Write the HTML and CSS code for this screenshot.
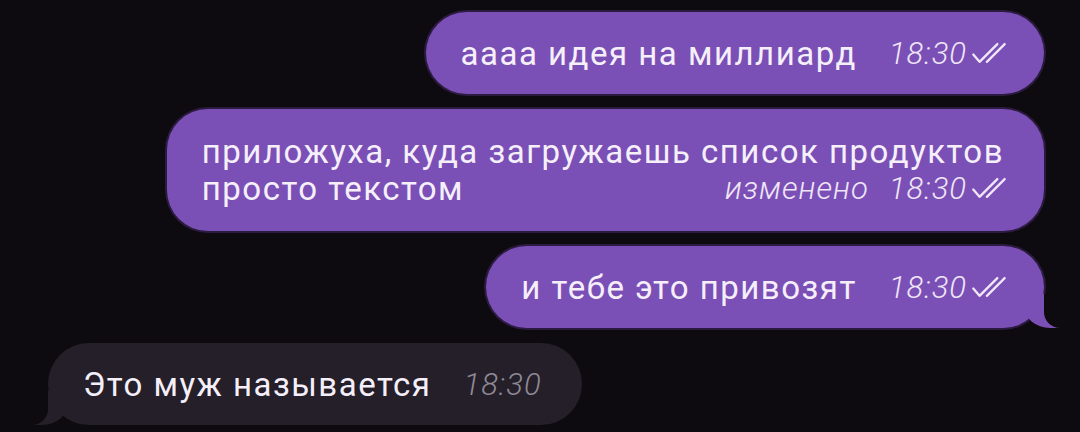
FILE: index.html
```
<!DOCTYPE html>
<html lang="ru">
<head>
<meta charset="UTF-8" />
<meta name="viewport" content="width=device-width, initial-scale=1" />
<title>Чат</title>
<link rel="stylesheet" href="styles.css">
</head>
<body>
  <main class="chat">

    <!-- outgoing -->
    <div class="msg out">
      <span class="text">аааа идея на миллиард</span>
      <span class="meta">
        <span class="time">18:30</span>
        <svg class="ticks" viewBox="0 0 36 22"><path d="M2 12 L8 19 L25 2" /><path d="M15 19 L32 2" /></svg>
      </span>
    </div>

    <div class="msg out multi">
      <p class="text">приложуха, куда загружаешь список продуктов</p>
      <div class="last-line">
        <span class="text">просто текстом</span>
        <span class="meta">
          <span class="edited">изменено</span>
          <span class="time">18:30</span>
          <svg class="ticks" viewBox="0 0 36 22"><path d="M2 12 L8 19 L25 2" /><path d="M15 19 L32 2" /></svg>
        </span>
      </div>
    </div>

    <div class="msg out tail">
      <span class="text">и тебе это привозят</span>
      <span class="meta">
        <span class="time">18:30</span>
        <svg class="ticks" viewBox="0 0 36 22"><path d="M2 12 L8 19 L25 2" /><path d="M15 19 L32 2" /></svg>
      </span>
    </div>

    <!-- incoming -->
    <div class="msg in tail">
      <span class="text">Это муж называется</span>
      <span class="meta">
        <span class="time">18:30</span>
      </span>
    </div>

  </main>
</body>
</html>
```

FILE: styles.css
```
* {
  margin: 0;
  padding: 0;
  box-sizing: border-box;
}
body {
  background: #0e0b10;
  font-family: Roboto, 'Liberation Sans', sans-serif;
  color: #f5effa;
  overflow: hidden;
}
.chat {
  display: flex;
  flex-direction: column;
  align-items: flex-end;
  gap: 15px;
  padding: 12px 36px 0 48px;
}

/* bubbles */
.msg {
  position: relative;
  display: flex;
  align-items: center;
  height: 82px;
  padding: 0 34px 0 35px;
  border-radius: 41px;
  font-size: 33px;
  letter-spacing: 1.5px;
}
.msg.out {
  background: #7b50b6;
  box-shadow: 0 0 0 2px #2c1b40;
}
.msg.in {
  align-self: flex-start;
  background: #241f29;
  padding-right: 40px;
}
.msg.multi {
  flex-direction: column;
  align-items: stretch;
  justify-content: center;
  height: 122px;
  padding-right: 40px;
  line-height: 37px;
}
.last-line {
  display: flex;
  justify-content: space-between;
  align-items: center;
}
.last-line .meta {
  margin-right: -6px;
}

/* meta: time + ticks */
.meta {
  display: flex;
  align-items: center;
  margin-left: 32px;
  font-style: italic;
  font-weight: 300;
  font-size: 31px;
  letter-spacing: 1px;
  color: #efe6f7;
}
.msg.in .meta {
  color: #8f8996;
}
.edited {
  margin-right: 20px;
}
.ticks {
  width: 40px;
  height: 23px;
  margin-left: 3px;
  fill: none;
  stroke: #efe6f7;
  stroke-width: 2.2;
  stroke-linecap: round;
  stroke-linejoin: round;
}

/* tails */
.msg.tail::before,
.msg.tail::after {
  content: "";
  position: absolute;
  bottom: 0;
  height: 34px;
}
.msg.out.tail::before {
  right: -16px;
  width: 36px;
  background: #7b50b6;
  border-bottom-left-radius: 26px 22px;
}
.msg.out.tail::after {
  right: -44px;
  width: 44px;
  background: #0e0b10;
  border-bottom-left-radius: 16px;
}
.msg.in.tail::before {
  left: -16px;
  width: 36px;
  background: #241f29;
  border-bottom-right-radius: 26px 22px;
}
.msg.in.tail::after {
  left: -44px;
  width: 44px;
  background: #0e0b10;
  border-bottom-right-radius: 16px;
}
```
